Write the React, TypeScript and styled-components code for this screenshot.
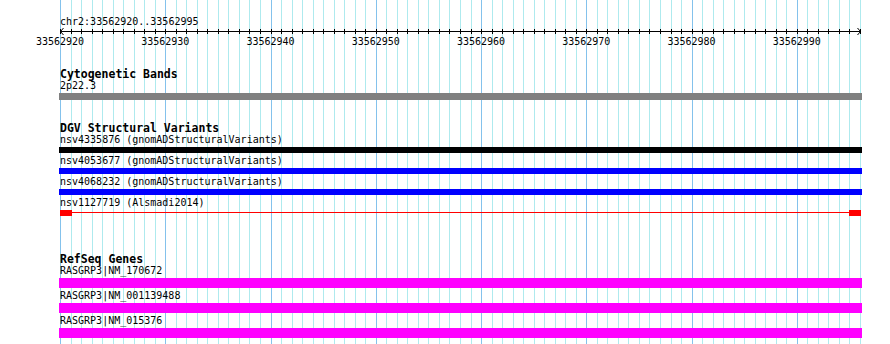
import React from 'react';
import styled, { createGlobalStyle } from 'styled-components';

const START = 33562920;
const END = 33562995;
const BP_COUNT = END - START + 1; // 76
const ORIGIN = 60;
const TRACK_W = 800;
const PX_PER_BP = TRACK_W / BP_COUNT;

const GlobalStyle = createGlobalStyle`
  html, body { margin: 0; padding: 0; background: #ffffff; }
  body {
    font-family: "DejaVu Sans Mono", "Liberation Mono", monospace;
    color: #000000;
  }
`;

const Page = styled.div`
  position: relative;
  width: 890px;
  height: 344px;
  overflow: hidden;
  background: #ffffff;
`;

const GridLayer = styled.svg`
  position: absolute;
  left: 0;
  top: 0;
  z-index: 0;
`;

const Content = styled.div`
  position: relative;
  z-index: 1;
  display: flex;
  flex-direction: column;
  padding: 16px 0 0 ${ORIGIN}px;
`;

const Locus = styled.div`
  font-size: 10px;
  line-height: 12px;
  height: 12px;
  white-space: nowrap;
`;

const Axis = styled.svg`
  display: block;
`;

const RulerLabels = styled.div`
  display: flex;
  margin-left: -${(PX_PER_BP * 10) / 2}px;
  height: 12px;
`;

const RulerLabel = styled.div`
  flex: 0 0 ${PX_PER_BP * 10}px;
  text-align: center;
  font-size: 10px;
  line-height: 11px;
  white-space: nowrap;
`;

const Track = styled.section<{ $gap: number }>`
  display: flex;
  flex-direction: column;
  margin-top: ${(p) => p.$gap}px;
`;

const TrackTitle = styled.div`
  font-weight: bold;
  font-size: 11.5px;
  line-height: 13px;
  height: 13px;
  white-space: nowrap;
`;

const FeatureLabel = styled.div`
  position: relative;
  z-index: 2;
  font-size: 10px;
  line-height: 10px;
  height: 12px;
  white-space: nowrap;
`;

const Bar = styled.div<{ $color: string; $h: number }>`
  margin-left: -1px;
  width: 803px;
  height: ${(p) => p.$h}px;
  background: ${(p) => p.$color};
  margin-bottom: 3px;
`;

const SpanFeature = styled.div`
  display: flex;
  align-items: flex-start;
  width: 801px;
  height: 6px;
  margin-bottom: 3px;
`;

const SpanBlock = styled.div`
  flex: 0 0 12px;
  height: 6px;
  background: #ff0000;
`;

const SpanLine = styled.div`
  flex: 1;
  height: 1px;
  margin-top: 2px;
  background: #ff0000;
`;

const lineX = (i: number) => Math.round(ORIGIN + i * PX_PER_BP);

function Grid() {
  const lines = [];
  for (let i = 0; i <= BP_COUNT; i++) {
    const x = lineX(i) + 0.5;
    const major = i % 10 === 0;
    lines.push(
      <line
        key={i}
        x1={x}
        x2={x}
        y1={0}
        y2={344}
        stroke={major ? '#84c2ec' : '#aeeaee'}
        strokeWidth={1}
      />
    );
  }
  return (
    <GridLayer width={890} height={344} viewBox="0 0 890 344">
      {lines}
    </GridLayer>
  );
}

function RulerAxis() {
  const ticks = [];
  for (let i = 0; i <= BP_COUNT; i++) {
    const x = lineX(i) - ORIGIN + 0.5;
    ticks.push(<line key={i} x1={x} x2={x} y1={1} y2={6} stroke="#000" strokeWidth={1} />);
  }
  return (
    <Axis width={806} height={8} viewBox="0 0 806 8">
      <line x1={0} x2={801} y1={3.5} y2={3.5} stroke="#000" strokeWidth={1} />
      {ticks}
      <polyline points="3.5,0 0.5,3.5 3.5,7" fill="none" stroke="#000" strokeWidth={1} />
      <polyline points="797.5,0 800.5,3.5 797.5,7" fill="none" stroke="#000" strokeWidth={1} />
    </Axis>
  );
}

const dgv = [
  { name: 'nsv4335876 (gnomADStructuralVariants)', color: '#000000' },
  { name: 'nsv4053677 (gnomADStructuralVariants)', color: '#0000ff' },
  { name: 'nsv4068232 (gnomADStructuralVariants)', color: '#0000ff' },
];

const genes = ['RASGRP3|NM_170672', 'RASGRP3|NM_001139488', 'RASGRP3|NM_015376'];

export default function App() {
  const labels = [];
  for (let p = START; p <= END; p += 10) labels.push(p);
  return (
    <>
      <GlobalStyle />
      <Page>
        <Grid />
        <Content>
          <Locus>chr2:{START}..{END}</Locus>
          <RulerAxis />
          <RulerLabels>
            {labels.map((l) => (
              <RulerLabel key={l}>{l}</RulerLabel>
            ))}
          </RulerLabels>

          <Track $gap={20}>
            <TrackTitle>Cytogenetic Bands</TrackTitle>
            <FeatureLabel>2p22.3</FeatureLabel>
            <Bar $color="#808080" $h={7} />
          </Track>

          <Track $gap={19}>
            <TrackTitle>DGV Structural Variants</TrackTitle>
            {dgv.map((d) => (
              <React.Fragment key={d.name}>
                <FeatureLabel>{d.name}</FeatureLabel>
                <Bar $color={d.color} $h={6} />
              </React.Fragment>
            ))}
            <FeatureLabel>nsv1127719 (Alsmadi2014)</FeatureLabel>
            <SpanFeature>
              <SpanBlock />
              <SpanLine />
              <SpanBlock />
            </SpanFeature>
          </Track>

          <Track $gap={34}>
            <TrackTitle>RefSeq Genes</TrackTitle>
            {genes.map((g) => (
              <React.Fragment key={g}>
                <FeatureLabel>{g}</FeatureLabel>
                <Bar $color="#ff00ff" $h={10} />
              </React.Fragment>
            ))}
          </Track>
        </Content>
      </Page>
    </>
  );
}
